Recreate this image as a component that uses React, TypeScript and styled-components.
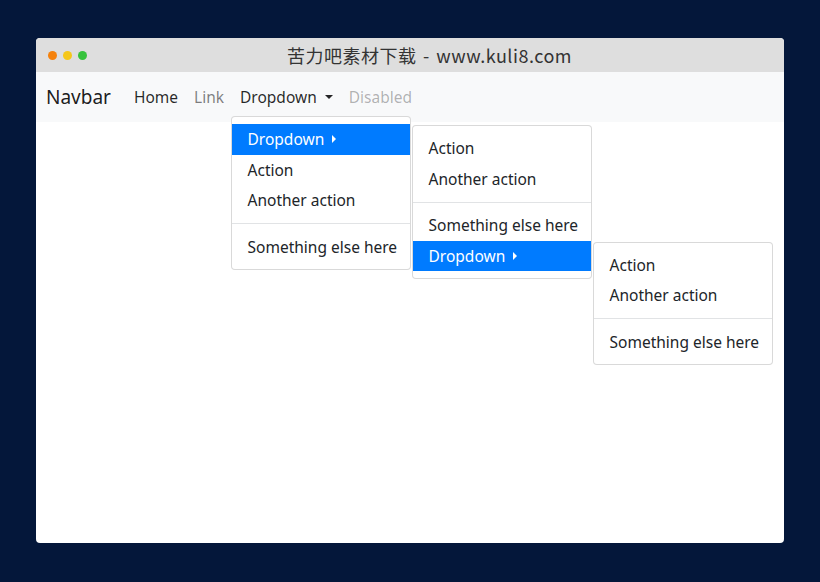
import styled, { createGlobalStyle } from "styled-components";

const Global = createGlobalStyle`
  html, body {
    margin: 0;
    padding: 0;
    background: #04173a;
  }
  * { box-sizing: border-box; }
`;

const Page = styled.div`
  width: 820px;
  height: 582px;
  padding: 38px 36px 0 36px;
  font-family: "Noto Sans", "Open Sans", sans-serif;
`;

const Window = styled.div`
  width: 748px;
  height: 505px;
  background: #fff;
  border-radius: 4px;
  display: flex;
  flex-direction: column;
`;

const TitleBar = styled.div`
  height: 34px;
  background: #dedede;
  border-radius: 4px 4px 0 0;
  display: flex;
  align-items: center;
  padding: 0 12px;
`;

const Dots = styled.div`
  display: flex;
  gap: 6px;
`;

const Dot = styled.span<{ $c: string }>`
  width: 9px;
  height: 9px;
  border-radius: 50%;
  background: ${(p) => p.$c};
`;

const Title = styled.div`
  flex: 1;
  text-align: center;
  font-family: "Noto Sans CJK SC", "Noto Sans", sans-serif;
  font-size: 18px;
  color: #333;
  letter-spacing: 0.5px;
  word-spacing: 2px;
`;

const Navbar = styled.nav`
  height: 50px;
  background: #f8f9fa;
  display: flex;
  align-items: center;
  padding: 0 10px;
`;

const Brand = styled.a`
  font-size: 19px;
  color: rgba(0, 0, 0, 0.9);
  margin-right: 15px;
`;

const NavList = styled.ul`
  display: flex;
  list-style: none;
  margin: 0;
  padding: 0;
`;

const NavItem = styled.li`
  position: relative;
`;

const NavLink = styled.a<{ $tone?: "active" | "muted" | "disabled" }>`
  display: flex;
  align-items: center;
  padding: 8px 8px;
  font-size: 15.5px;
  line-height: 24px;
  color: ${(p) =>
    p.$tone === "muted"
      ? "rgba(0,0,0,0.5)"
      : p.$tone === "disabled"
      ? "rgba(0,0,0,0.3)"
      : "rgba(0,0,0,0.85)"};
`;

const CaretDown = styled.span`
  display: inline-block;
  margin-left: 8px;
  border-top: 4.5px solid currentColor;
  border-left: 4px solid transparent;
  border-right: 4px solid transparent;
`;

const CaretRight = styled.span`
  display: inline-block;
  margin-left: 8px;
  border-left: 4px solid currentColor;
  border-top: 4px solid transparent;
  border-bottom: 4px solid transparent;
`;

const Menu = styled.ul<{ $top: string; $left: string }>`
  position: absolute;
  top: ${(p) => p.$top};
  left: ${(p) => p.$left};
  width: 180px;
  margin: 0;
  padding: 7px 0;
  list-style: none;
  background: #fff;
  border: 1px solid rgba(0, 0, 0, 0.15);
  border-radius: 4px;
  z-index: 2;
`;

const MenuItem = styled.li`
  position: relative;
`;

const ItemLink = styled.a<{ $active?: boolean }>`
  display: flex;
  align-items: center;
  padding: 4px 16px;
  font-size: 15.5px;
  line-height: 22.5px;
  white-space: nowrap;
  color: ${(p) => (p.$active ? "#fff" : "#212529")};
  background: ${(p) => (p.$active ? "#007bff" : "transparent")};
`;

const Divider = styled.li`
  height: 1px;
  margin: 7.5px 0;
  background: #e1e3e5;
`;

const Content = styled.div`
  flex: 1;
`;

export default function App() {
  return (
    <Page>
      <Global />
      <Window>
        <TitleBar>
          <Dots>
            <Dot $c="#f5820d" />
            <Dot $c="#f5c71a" />
            <Dot $c="#36c23c" />
          </Dots>
          <Title>苦力吧素材下载 - www.kuli8.com</Title>
        </TitleBar>
        <Navbar>
          <Brand>Navbar</Brand>
          <NavList>
            <NavItem>
              <NavLink $tone="active">Home</NavLink>
            </NavItem>
            <NavItem>
              <NavLink $tone="muted">Link</NavLink>
            </NavItem>
            <NavItem>
              <NavLink $tone="active">
                Dropdown
                <CaretDown />
              </NavLink>
              <Menu $top="calc(100% - 1px)" $left="-1.5px">
                <MenuItem>
                  <ItemLink $active>
                    Dropdown
                    <CaretRight />
                  </ItemLink>
                  <Menu $top="1px" $left="calc(100% + 2px)">
                    <MenuItem>
                      <ItemLink>Action</ItemLink>
                    </MenuItem>
                    <MenuItem>
                      <ItemLink>Another action</ItemLink>
                    </MenuItem>
                    <Divider />
                    <MenuItem>
                      <ItemLink>Something else here</ItemLink>
                    </MenuItem>
                    <MenuItem>
                      <ItemLink $active>
                        Dropdown
                        <CaretRight />
                      </ItemLink>
                      <Menu $top="1px" $left="calc(100% + 2px)">
                        <MenuItem>
                          <ItemLink>Action</ItemLink>
                        </MenuItem>
                        <MenuItem>
                          <ItemLink>Another action</ItemLink>
                        </MenuItem>
                        <Divider />
                        <MenuItem>
                          <ItemLink>Something else here</ItemLink>
                        </MenuItem>
                      </Menu>
                    </MenuItem>
                  </Menu>
                </MenuItem>
                <MenuItem>
                  <ItemLink>Action</ItemLink>
                </MenuItem>
                <MenuItem>
                  <ItemLink>Another action</ItemLink>
                </MenuItem>
                <Divider />
                <MenuItem>
                  <ItemLink>Something else here</ItemLink>
                </MenuItem>
              </Menu>
            </NavItem>
            <NavItem>
              <NavLink $tone="disabled">Disabled</NavLink>
            </NavItem>
          </NavList>
        </Navbar>
        <Content />
      </Window>
    </Page>
  );
}
